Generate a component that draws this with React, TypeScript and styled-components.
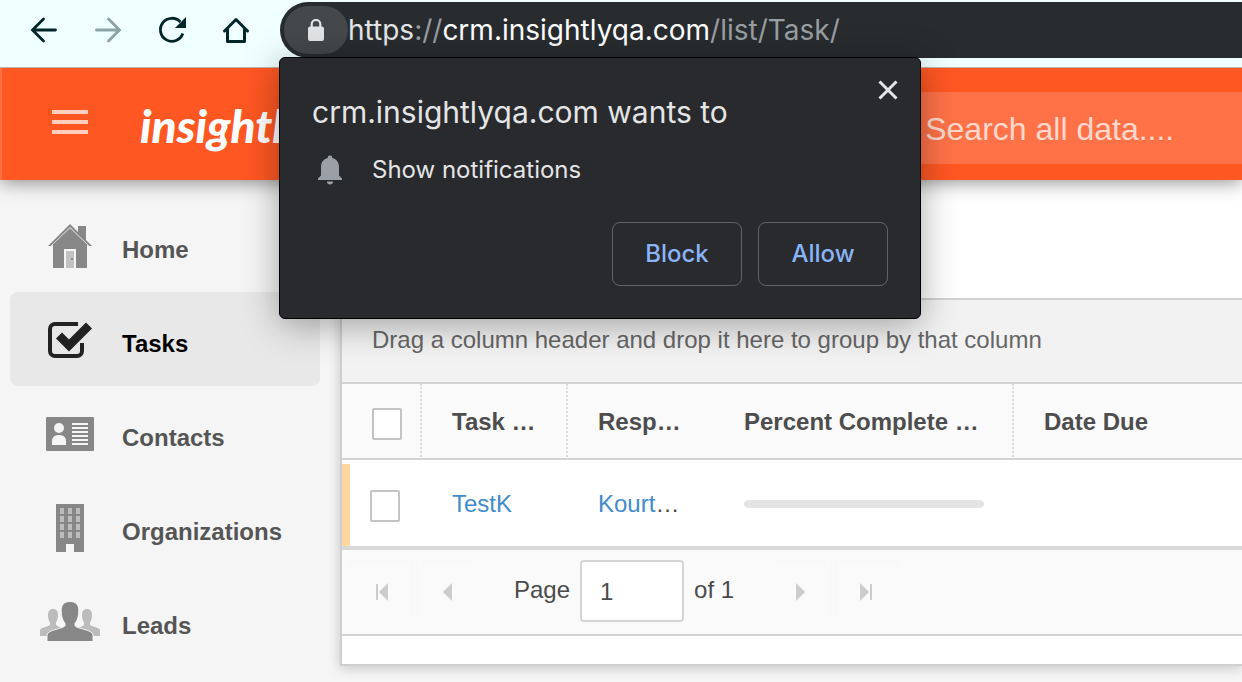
import React from "react";
import styled, { createGlobalStyle, css } from "styled-components";

const Global = createGlobalStyle`
  *, *::before, *::after { box-sizing: border-box; }
  html, body { margin: 0; background: #f5f5f5; }
  body { font-family: "Liberation Sans", Arial, sans-serif; font-size: 24px; line-height: 28px; color: #4a4a4a; overflow-x: hidden; }
  button, input { font: inherit; color: inherit; margin: 0; padding: 0; }
`;

const uiFont = css`
  font-family: Inter, Roboto, sans-serif;
`;

const Page = styled.div`
  display: flex;
  flex-direction: column;
  min-height: 100vh;
`;

const Toolbar = styled.div`
  position: relative;
  z-index: 3;
  display: flex;
  height: 68px;
  padding: 2px 0 0 12px;
  background: #f0ffff;
  border-bottom: 1px solid #b9b4b2;
`;

const NavButtons = styled.nav`
  display: flex;
  height: 56px;
  width: 268px;
  flex: none;
  align-items: center;
`;

const IconButton = styled.button<{ $faded?: boolean }>`
  display: flex;
  align-items: center;
  justify-content: center;
  flex: none;
  width: 64px;
  height: 48px;
  border: 0;
  background: none;
  color: #00262a;
  opacity: ${(p) => (p.$faded ? 0.42 : 1)};
`;

const Omnibox = styled.div`
  ${uiFont}
  position: relative;
  display: flex;
  align-items: center;
  flex: 1;
  height: 56px;
  padding-left: 4px;
  border-radius: 28px 0 0 28px;
  background: #282c2f;
`;

const LockButton = styled.button`
  display: flex;
  align-items: center;
  justify-content: center;
  flex: none;
  width: 64px;
  height: 48px;
  border: 0;
  border-radius: 24px;
  background: #44484a;
`;

const Url = styled.span`
  font-size: 28px;
  line-height: 32px;
  white-space: nowrap;
  color: #e3e5e7;
`;
const UrlMuted = styled.span`
  color: #999ea3;
`;
const UrlHost = styled.span`
  color: #ffffff;
`;

const Prompt = styled.section`
  position: absolute;
  top: 55px;
  left: -1px;
  width: 642px;
  padding: 16px 32px 32px;
  border: 1px solid #000000;
  border-radius: 6px;
  background: #292a2d;
  color: #e4e5e6;
  box-shadow: 0 6px 36px rgba(0, 0, 0, 0.34);
`;

const PromptHead = styled.div`
  display: flex;
  align-items: flex-start;
  justify-content: space-between;
`;

const PromptTitle = styled.h1`
  margin: 20px 0 0;
  font-size: 30px;
  line-height: 36px;
  font-weight: 400;
  white-space: nowrap;
`;

const CloseButton = styled.button`
  display: flex;
  align-items: center;
  justify-content: center;
  width: 32px;
  height: 32px;
  margin-right: -16px;
  border: 0;
  background: none;
`;

const Permission = styled.div`
  display: flex;
  align-items: center;
  gap: 24px;
  height: 36px;
  margin-top: 22px;
  font-size: 24px;
`;

const PromptActions = styled.div`
  display: flex;
  justify-content: flex-end;
  gap: 16px;
  margin-top: 34px;
`;

const PromptButton = styled.button`
  width: 130px;
  height: 64px;
  border: 1px solid #5f6368;
  border-radius: 8px;
  background: none;
  color: #8ab4f8;
  font-weight: 500;
`;

const AppHeader = styled.header`
  position: relative;
  z-index: 2;
  display: flex;
  align-items: center;
  justify-content: space-between;
  height: 112px;
  background: #ff5722;
  border-left: 2px solid #ff6f42;
  box-shadow: 0 2px 18px rgba(0, 0, 0, 0.45);
`;

const Brand = styled.div`
  display: flex;
  align-items: center;
  gap: 38px;
  padding: 0 0 4px 36px;
`;

const Wordmark = styled.a`
  padding-top: 8px;
  font-family: Lato, sans-serif;
  font-size: 46px;
  line-height: 56px;
  font-weight: 900;
  font-style: italic;
  color: #ffffff;
  text-decoration: none;
`;

const Search = styled.input`
  flex: none;
  width: 32%;
  height: 72px;
  margin-top: 8px;
  padding: 2px 0 0 80px;
  border: 0;
  border-radius: 0;
  background: #ff7248;
  font-size: 32px;
  &::placeholder { color: #ffd9cd; opacity: 1; }
`;

const Body = styled.div`
  display: flex;
  flex: 1;
  align-items: flex-start;
`;

const Sidebar = styled.nav`
  flex: none;
  width: 340px;
  padding: 18px 20px 0 10px;
`;

const SideLink = styled.a<{ $active?: boolean }>`
  display: flex;
  align-items: center;
  height: 94px;
  padding: 2px 0 0 28px;
  gap: 20px;
  border-radius: 8px;
  background: ${(p) => (p.$active ? "#e8e8e8" : "transparent")};
  color: ${(p) => (p.$active ? "#000000" : "#555555")};
  font-weight: 700;
  text-decoration: none;
  svg { flex: none; }
  span { padding-top: 8px; }
`;

const Grid = styled.main`
  flex: 1;
  min-width: 0;
  padding-bottom: 28px;
  border: solid #cfcfcf;
  border-width: 0 0 2px 2px;
  background: #ffffff;
  box-shadow: 0 2px 12px rgba(0, 0, 0, 0.2);
`;

const Actions = styled.div`
  height: 118px;
`;

const GroupDrop = styled.div`
  height: 86px;
  padding: 26px 30px;
  border: solid #d2d2d2;
  border-width: 2px 0;
  background: #f2f2f2;
  color: #666666;
  white-space: nowrap;
`;

const Table = styled.table`
  width: 100%;
  table-layout: fixed;
  border-collapse: separate;
  border-spacing: 0;
`;

const HeadCell = styled.th<{ $w?: number; $divider?: boolean }>`
  width: ${(p) => (p.$w ? `${p.$w}px` : "auto")};
  height: 76px;
  padding: 2px 0 0 30px;
  border-bottom: 2px solid #d2d2d2;
  border-right: ${(p) => (p.$divider ? "2px dotted #dadada" : "0")};
  background: #fafafa;
  text-align: left;
  white-space: nowrap;
  color: #4d4d4d;
`;

const CheckHeadCell = styled(HeadCell)`
  padding-top: 6px;
`;

const Cell = styled.td`
  height: 90px;
  padding: 2px 0 0 30px;
  border-bottom: 4px solid #d8d8d8;
  white-space: nowrap;
`;

const MarkCell = styled(Cell)`
  padding: 4px 0 0;
`;

const RowMark = styled.div`
  display: flex;
  align-items: center;
  height: 82px;
  padding: 2px 0 0 20px;
  border-left: 8px solid #ffd8a0;
`;

const Check = styled.input`
  appearance: none;
  display: block;
  width: 30px;
  height: 32px;
  border: 2px solid #c4c4c4;
  border-radius: 2px;
  background: #ffffff;
`;

const CellLink = styled.a`
  color: #428bca;
  text-decoration: none;
`;

const Track = styled.div`
  width: 240px;
  height: 8px;
  border-radius: 4px;
  background: #e4e4e4;
`;

const Pager = styled.div`
  display: flex;
  align-items: center;
  height: 86px;
  padding: 0 8px 2px;
  border-bottom: 2px solid #d2d2d2;
  background: #fafafa;
`;

const PagerGroup = styled.div`
  display: flex;
  gap: 4px;
`;

const PagerButton = styled.button`
  display: flex;
  align-items: center;
  justify-content: center;
  width: 62px;
  height: 62px;
  padding-top: 2px;
  border: 1px solid #f8f8f8;
  background: none;
  color: #cccccc;
`;

const PagerLabel = styled.label`
  display: flex;
  align-items: center;
  gap: 10px;
  margin: 0 36px;
  white-space: nowrap;
  span { padding-bottom: 2px; }
`;

const PageInput = styled.input`
  width: 104px;
  height: 62px;
  padding: 2px 0 0 18px;
  border: 2px solid #d4d4d4;
  border-radius: 4px;
  background: #ffffff;
`;

const ArrowIcon = ({ flip }: { flip?: boolean }) => (
  <svg width="28" height="28" viewBox="0 0 28 28" fill="none" stroke="currentColor" strokeWidth="2.8">
    <path
      d={flip ? "M2.5 14H25M14.500 3L25.500 14L14.500 25" : "M25.500 14H3M13.500 3L2.500 14L13.500 25"}
      strokeLinecap="round"
    />
  </svg>
);

const ReloadIcon = () => (
  <svg width="28" height="28" viewBox="0 0 28 28">
    <path d="M24.800 17.500A11.500 11.500 0 1 1 22.400 6" fill="none" stroke="currentColor" strokeWidth="2.8" />
    <path d="M28 1V12H17Z" fill="currentColor" />
  </svg>
);

const HouseOutlineIcon = () => (
  <svg width="28" height="28" viewBox="0 0 28 28" fill="none" stroke="currentColor" strokeWidth="3">
    <path d="M2.500 15L14 3.500L25.500 15M5.500 13V25.500H22.500V13" strokeLinecap="round" strokeLinejoin="round" />
  </svg>
);

const LockIcon = () => (
  <svg width="16" height="22" viewBox="0 0 16 22">
    <path d="M3.700 8.500V5.300a4.300 4.300 0 0 1 8.600 0V8.500" fill="none" stroke="#e2e4e5" strokeWidth="2.2" />
    <rect y="7.500" width="16" height="14.500" rx="2" fill="#e2e4e5" />
  </svg>
);

const CloseIcon = () => (
  <svg width="20" height="20" viewBox="0 0 20 20" stroke="#e4e5e6" strokeWidth="3">
    <path d="M1.500 1.500L18.500 18.500M18.500 1.500L1.500 18.500" />
  </svg>
);

const BellIcon = () => (
  <svg width="36" height="30" viewBox="0 0 36 30" fill="#9aa0a6">
    <path d="M18 0.500a2.200 2.200 0 0 1 2.300 2.400C24.800 4 27 7.600 27 12v8.500l3 3V25H6v-1.500l3-3V12c0-4.400 2.200-8 6.700-9.100A2.200 2.200 0 0 1 18 .5Z" />
    <path d="M15 26.500h6a3 3 0 0 1-6 0Z" />
  </svg>
);

const MenuIcon = () => (
  <svg width="36" height="24" viewBox="0 0 36 24" fill="#ffcfc0">
    <path d="M0 0h36v4H0zM0 10h36v4H0zM0 20h36v4H0z" />
  </svg>
);

const HomeIcon = () => (
  <svg width="64" height="48" viewBox="0 0 64 48">
    <path d="M15 22L32 6L49 22V46H15Z" fill="#878787" />
    <path d="M40 4h8v16l-8-8z" fill="#878787" />
    <path d="M10 24L32 2L54 24H50.500L32 5.500L13.500 24Z" fill="#878787" />
    <path d="M13 24L32 5.500L51 24" fill="none" stroke="#d8d8d8" strokeWidth="1" />
    <path d="M26 27h12v19H26z" fill="#f5f5f5" />
    <path d="M28 29h8v17h-8z" fill="#c2c2c2" />
    <path d="M33 36h2v2h-2z" fill="#878787" />
  </svg>
);

const TasksIcon = () => (
  <svg width="64" height="48" viewBox="0 0 64 48">
    <path
      d="M40 8H17a5 5 0 0 0-5 5v22a5 5 0 0 0 5 5h22a5 5 0 0 0 5-5v-8"
      fill="none"
      stroke="#222222"
      strokeWidth="4"
    />
    <path d="M21 19.500L31 29.500L51 9.500" fill="none" stroke="#222222" strokeWidth="8.500" />
  </svg>
);

const ContactsIcon = () => (
  <svg width="64" height="48" viewBox="0 0 64 48">
    <rect x="8" y="7" width="48" height="34" rx="1" fill="#878787" />
    <circle cx="21" cy="18" r="5" fill="#f5f5f5" />
    <path d="M14 35v-4c0-4 3-6 7-6s7 2 7 6v4z" fill="#f5f5f5" />
    <path d="M34 13h16v2H34zM34 17h16v2H34zM34 21h16v2H34zM34 25h16v2H34zM34 29h16v2H34zM34 33h16v2H34z" fill="#f5f5f5" />
  </svg>
);

const OrganizationsIcon = () => (
  <svg width="64" height="48" viewBox="0 0 64 48">
    <path d="M18 0h28v48H36v-8h-8v8H18z" fill="#878787" />
    {[4, 12, 20, 28].map((y) =>
      [22, 30, 38].map((x) => <rect key={`${x}-${y}`} x={x} y={y} width="4" height="6" fill="#bcbcbc" />)
    )}
  </svg>
);

const LeadsIcon = () => (
  <svg width="64" height="48" viewBox="0 0 64 48">
    <path
      d="M15 11c3.500 0 5 2.500 5 6 0 3-.8 6-2 7.500v2c0 2 8 3 8 6V38H2v-6c0-2.500 10-3.500 10-5.500v-2c-1.200-1.500-2-4.500-2-7.500 0-3.500 1.500-6 5-6Z"
      fill="#bcbcbc"
    />
    <path
      d="M49 11c-3.500 0-5 2.500-5 6 0 3 .8 6 2 7.500v2c0 2-8 3-8 6V38h24v-6c0-2.500-10-3.500-10-5.500v-2c1.200-1.500 2-4.500 2-7.500 0-3.500-1.500-6-5-6Z"
      fill="#bcbcbc"
    />
    <path
      d="M32 3.500c6 0 8.800 3.500 8.800 9 0 5.500-1.300 10-3.800 13v2c0 3 18 4 18 9.500v6.500H9V37c0-5.500 18-6.500 18-9.500v-2c-2.500-3-3.800-7.500-3.800-13 0-5.500 2.800-9 8.800-9Z"
      fill="#878787"
      stroke="#f5f5f5"
      strokeWidth="1"
    />
  </svg>
);

const EdgeIcon = ({ flip, bar }: { flip?: boolean; bar?: boolean }) => (
  <svg width="14" height="18" viewBox="0 0 14 18" fill="currentColor">
    <g transform={flip ? "matrix(-1 0 0 1 14 0)" : undefined}>
      {bar && <path d="M2 1h2v16H2z" />}
      <path d={bar ? "M14 0v18L5 9z" : "M12 0v18L3 9z"} />
    </g>
  </svg>
);

const links = [
  { label: "Home", Icon: HomeIcon },
  { label: "Tasks", Icon: TasksIcon, active: true },
  { label: "Contacts", Icon: ContactsIcon },
  { label: "Organizations", Icon: OrganizationsIcon },
  { label: "Leads", Icon: LeadsIcon },
];

export default function App() {
  return (
    <Page>
      <Global />
      <Toolbar>
        <NavButtons aria-label="Browser">
          <IconButton aria-label="Back"><ArrowIcon /></IconButton>
          <IconButton aria-label="Forward" $faded><ArrowIcon flip /></IconButton>
          <IconButton aria-label="Reload"><ReloadIcon /></IconButton>
          <IconButton aria-label="Home page"><HouseOutlineIcon /></IconButton>
        </NavButtons>
        <Omnibox>
          <LockButton aria-label="Site information"><LockIcon /></LockButton>
          <Url>
            https<UrlMuted>://</UrlMuted><UrlHost>crm.insightlyqa.com</UrlHost><UrlMuted>/list/Task/</UrlMuted>
          </Url>
          <Prompt role="dialog" aria-labelledby="prompt-title">
            <PromptHead>
              <PromptTitle id="prompt-title">crm.insightlyqa.com wants to</PromptTitle>
              <CloseButton aria-label="Close"><CloseIcon /></CloseButton>
            </PromptHead>
            <Permission><BellIcon />Show notifications</Permission>
            <PromptActions>
              <PromptButton>Block</PromptButton>
              <PromptButton>Allow</PromptButton>
            </PromptActions>
          </Prompt>
        </Omnibox>
      </Toolbar>
      <AppHeader>
        <Brand>
          <IconButton aria-label="Menu"><MenuIcon /></IconButton>
          <Wordmark href="#">insightly</Wordmark>
        </Brand>
        <Search type="search" aria-label="Search" placeholder="Search all data...." />
      </AppHeader>
      <Body>
        <Sidebar aria-label="Main">
          {links.map(({ label, Icon, active }) => (
            <SideLink key={label} href="#" $active={active}>
              <Icon />
              <span>{label}</span>
            </SideLink>
          ))}
        </Sidebar>
        <Grid>
          <Actions />
          <GroupDrop>Drag a column header and drop it here to group by that column</GroupDrop>
          <Table>
            <thead>
              <tr>
                <CheckHeadCell $w={80} $divider><Check type="checkbox" aria-label="Select all" /></CheckHeadCell>
                <HeadCell $w={146} $divider>Task …</HeadCell>
                <HeadCell $w={146}>Resp…</HeadCell>
                <HeadCell $w={300} $divider>Percent Complete …</HeadCell>
                <HeadCell>Date Due</HeadCell>
              </tr>
            </thead>
            <tbody>
              <tr>
                <MarkCell><RowMark><Check type="checkbox" aria-label="Select TestK" /></RowMark></MarkCell>
                <Cell><CellLink href="#">TestK</CellLink></Cell>
                <Cell><CellLink href="#">Kourt</CellLink>…</Cell>
                <Cell><Track role="progressbar" aria-label="Percent complete" aria-valuenow={0} /></Cell>
                <Cell />
              </tr>
            </tbody>
          </Table>
          <Pager>
            <PagerGroup>
              <PagerButton aria-label="First page"><EdgeIcon bar /></PagerButton>
              <PagerButton aria-label="Previous page"><EdgeIcon /></PagerButton>
            </PagerGroup>
            <PagerLabel>
              <span>Page</span>
              <PageInput defaultValue="1" />
              <span>of 1</span>
            </PagerLabel>
            <PagerGroup>
              <PagerButton aria-label="Next page"><EdgeIcon flip /></PagerButton>
              <PagerButton aria-label="Last page"><EdgeIcon flip bar /></PagerButton>
            </PagerGroup>
          </Pager>
        </Grid>
      </Body>
    </Page>
  );
}
